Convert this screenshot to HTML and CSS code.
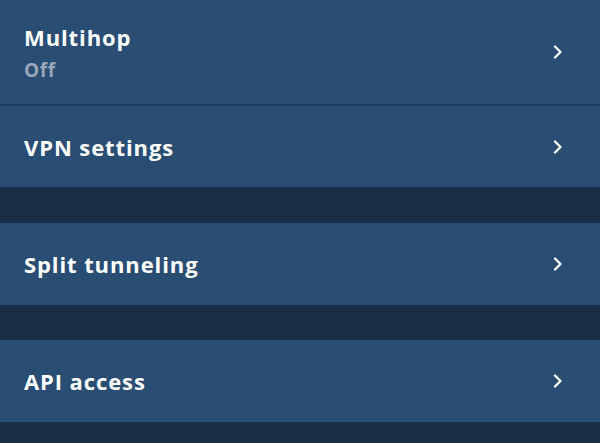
FILE: index.html
```html
<!DOCTYPE html>
<html>
<head>
<meta charset="utf-8">
<link rel="stylesheet" href="styles.css">
</head>
<body>
<div class="list">
  <div class="row row-tall row-divided">
    <div class="labels">
      <div class="title">Multihop</div>
      <div class="sub">Off</div>
    </div>
    <svg class="chev" width="10" height="14" viewBox="0 0 10 14"><path d="M2 1.5 L7.5 7 L2 12.5" fill="none" stroke="#fff" stroke-width="2.2" stroke-linecap="round" stroke-linejoin="round"/></svg>
  </div>
  <div class="row">
    <div class="title">VPN settings</div>
    <svg class="chev" width="10" height="14" viewBox="0 0 10 14"><path d="M2 1.5 L7.5 7 L2 12.5" fill="none" stroke="#fff" stroke-width="2.2" stroke-linecap="round" stroke-linejoin="round"/></svg>
  </div>
  <div class="gap"></div>
  <div class="row row-b">
    <div class="title">Split tunneling</div>
    <svg class="chev" width="10" height="14" viewBox="0 0 10 14"><path d="M2 1.5 L7.5 7 L2 12.5" fill="none" stroke="#fff" stroke-width="2.2" stroke-linecap="round" stroke-linejoin="round"/></svg>
  </div>
  <div class="gap gap-b"></div>
  <div class="row row-b">
    <div class="title">API access</div>
    <svg class="chev" width="10" height="14" viewBox="0 0 10 14"><path d="M2 1.5 L7.5 7 L2 12.5" fill="none" stroke="#fff" stroke-width="2.2" stroke-linecap="round" stroke-linejoin="round"/></svg>
  </div>
</div>
</body>
</html>
```

FILE: styles.css
```css
html, body {
  margin: 0;
  padding: 0;
  background: #192e45;
  width: 600px;
  height: 443px;
  overflow: hidden;
}
.list {
  display: flex;
  flex-direction: column;
  font-family: "Open Sans", "DejaVu Sans", sans-serif;
}
.row {
  display: flex;
  align-items: center;
  justify-content: space-between;
  height: 81px;
  padding: 0 37px 0 24px;
  background: #294d73;
  box-sizing: border-box;
}
.row-b {
  height: 82px;
}
.row-tall {
  height: 106px;
}
.row-divided {
  border-bottom: 2px solid #1f3d5e;
}
.labels {
  display: flex;
  flex-direction: column;
  gap: 9px;
}
.title {
  color: #ffffff;
  font-size: 22px;
  font-weight: 700;
  letter-spacing: 0.9px;
  line-height: 26px;
}
.sub {
  color: #9aa8b9;
  font-size: 19px;
  font-weight: 700;
  letter-spacing: 0.6px;
  line-height: 22px;
}
.chev {
  display: block;
}
.gap {
  height: 36px;
}
.gap-b {
  height: 35px;
}
```
